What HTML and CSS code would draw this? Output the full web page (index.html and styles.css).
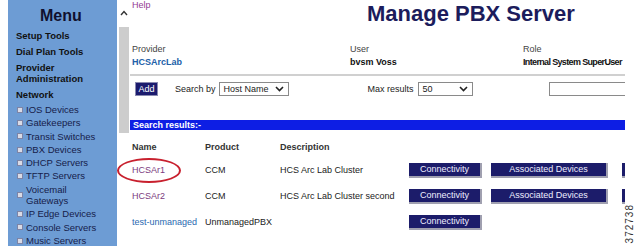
FILE: index.html
```html
<!DOCTYPE html>
<html lang="en">
<head>
  <meta charset="UTF-8">
  <meta name="viewport" content="width=device-width, initial-scale=1.0">
  <title>Manage PBX Server</title>
  <link rel="stylesheet" href="styles.css">
</head>
<body>

  <div class="page">
    <nav class="sidebar">
      <div class="menu-title">Menu</div>
      <div class="menu-head">Setup Tools</div>
      <div class="menu-head">Dial Plan Tools</div>
      <div class="menu-head">Provider<br>Administration</div>
      <div class="menu-head last">Network</div>
      <ul class="menu-list">
        <li><span class="bullet"></span><span>IOS Devices</span></li>
        <li><span class="bullet"></span><span>Gatekeepers</span></li>
        <li><span class="bullet"></span><span>Transit Switches</span></li>
        <li><span class="bullet"></span><span>PBX Devices</span></li>
        <li><span class="bullet"></span><span>DHCP Servers</span></li>
        <li><span class="bullet"></span><span>TFTP Servers</span></li>
        <li><span class="bullet"></span><span>Voicemail<br>Gateways</span></li>
        <li><span class="bullet"></span><span>IP Edge Devices</span></li>
        <li><span class="bullet"></span><span>Console Servers</span></li>
        <li><span class="bullet"></span><span>Music Servers</span></li>
      </ul>
    </nav>

    <div class="scrollbar">
      <svg class="scroll-arrow" width="8" height="6" viewBox="0 0 8 6">
        <polyline points="1,5 4,1.5 7,5" fill="none" stroke="#333" stroke-width="1.4"/>
      </svg>
      <div class="scroll-track"></div>
    </div>

    <main class="content">
      <div class="topbar">
        <a class="help" href="#">Help</a>
        <h1 class="title">Manage PBX Server</h1>
      </div>

      <div class="info">
        <div>
          <div class="info-label">Provider</div>
          <div class="info-value provider">HCSArcLab</div>
        </div>
        <div>
          <div class="info-label">User</div>
          <div class="info-value">bvsm Voss</div>
        </div>
        <div>
          <div class="info-label">Role</div>
          <div class="info-value role">Internal System SuperUser</div>
        </div>
      </div>

      <div class="divider"></div>

      <div class="search-row">
        <button type="button" class="add-btn">Add</button>
        <span class="search-label">Search by</span>
        <div class="select host-select">
          <span>Host Name</span>
          <svg width="9" height="6" viewBox="0 0 9 6"><polyline points="1,1 4.5,4.5 8,1" fill="none" stroke="#222" stroke-width="1.6"/></svg>
        </div>
        <span class="max-label">Max results</span>
        <div class="select max-select">
          <span>50</span>
          <svg width="9" height="6" viewBox="0 0 9 6"><polyline points="1,1 4.5,4.5 8,1" fill="none" stroke="#222" stroke-width="1.6"/></svg>
        </div>
        <input type="text" class="search-input">
      </div>

      <div class="results-bar">Search results:-</div>

      <div class="results">
        <div class="row head">
          <span>Name</span>
          <span>Product</span>
          <span>Description</span>
        </div>
        <div class="row">
          <a class="name visited" href="#">HCSAr1</a>
          <span>CCM</span>
          <span>HCS Arc Lab Cluster</span>
          <button type="button" class="btn conn">Connectivity</button>
          <button type="button" class="btn assoc">Associated Devices</button>
          <button type="button" class="btn more"></button>
        </div>
        <div class="row">
          <a class="name visited" href="#">HCSAr2</a>
          <span>CCM</span>
          <span>HCS Arc Lab Cluster second</span>
          <button type="button" class="btn conn">Connectivity</button>
          <button type="button" class="btn assoc">Associated Devices</button>
          <button type="button" class="btn more"></button>
        </div>
        <div class="row">
          <a class="name" href="#">test-unmanaged</a>
          <span>UnmanagedPBX</span>
          <span></span>
          <button type="button" class="btn conn">Connectivity</button>
        </div>
      </div>
    </main>

    <div class="highlight"></div>
    <div class="figure-id">372738</div>
  </div>

</body>
</html>
```

FILE: styles.css
```css
* {
  box-sizing: border-box;
}
body {
  margin: 0;
  font-family: "Liberation Sans", Arial, sans-serif;
  font-size: 9px;
  color: #222;
  background: #fff;
}
.page {
  position: relative;
  display: flex;
  width: 636px;
  height: 246px;
  overflow: hidden;
}

/* left menu */
.sidebar {
  flex: none;
  width: 109px;
  margin-left: 8px;
  padding: 7px 0 0 8px;
  background: #6d9cd4;
  color: #111;
}
.menu-title {
  margin: 0 0 5px 24px;
  font-size: 16px;
  font-weight: bold;
  line-height: 18px;
  color: #10102e;
}
.menu-head {
  margin-bottom: 5px;
  font-size: 9.5px;
  font-weight: bold;
  line-height: 11px;
}
.menu-head.last {
  margin-bottom: 3px;
}
.menu-list {
  list-style: none;
  margin: 0;
  padding: 0;
}
.menu-list li {
  display: flex;
  align-items: center;
  gap: 3px;
  padding: 1px 0 1px 1px;
  font-size: 9.5px;
  line-height: 11.3px;
  color: #16204a;
}
.bullet {
  flex: none;
  width: 6px;
  height: 6px;
  background: #d9dbe6;
  border: 1px solid #7d84a6;
}

/* scrollbar strip */
.scrollbar {
  flex: none;
  width: 10px;
  margin: 0 1px 0 2px;
  padding-top: 10px;
}
.scroll-arrow {
  display: block;
  margin: 0 auto;
}
.scroll-track {
  margin-top: 11px;
  height: 106px;
  background: #cdcdcd;
}

/* main area */
.content {
  flex: none;
  width: 495px;
  overflow: hidden;
}
.topbar {
  display: grid;
  grid-template-columns: 235px auto;
  padding-left: 2px;
}
.help {
  line-height: 11px;
  color: #943a94;
  text-decoration: none;
}
.title {
  margin: 1px 0 0;
  font-size: 22px;
  line-height: 26px;
  color: #1c1c5c;
  white-space: nowrap;
}
.info {
  display: grid;
  grid-template-columns: 218px 173px auto;
  margin-top: 15.5px;
  padding-left: 2px;
  line-height: 13px;
}
.info-label {
  color: #444;
}
.info-value {
  font-weight: bold;
  color: #111;
  white-space: nowrap;
}
.info-value.provider {
  color: #2160a8;
}
.info-value.role {
  letter-spacing: -0.65px;
}
.divider {
  margin-top: 5.5px;
  height: 2px;
  background: #d0d0d0;
}

.search-row {
  display: flex;
  align-items: center;
  height: 16px;
  margin-top: 5px;
  padding-left: 5px;
  white-space: nowrap;
}
.search-row > * {
  flex: none;
}
.add-btn {
  width: 23px;
  height: 14px;
  padding: 0;
  background: #1b1b6e;
  color: #fff;
  border: 1px solid #8a8ab0;
  font-family: inherit;
  font-size: 9px;
}
.search-label {
  margin-left: 17px;
}
.select {
  display: flex;
  align-items: center;
  justify-content: space-between;
  height: 14px;
  padding: 0 4px;
  background: #fff;
  border: 1px solid #8a8a8a;
}
.host-select {
  width: 70px;
  margin-left: 3px;
}
.max-label {
  margin-left: 79px;
}
.max-select {
  width: 55px;
  margin-left: 4px;
}
.search-input {
  width: 100px;
  height: 14px;
  margin-left: 76px;
  border: 1px solid #8a8a8a;
}

.results-bar {
  margin-top: 23px;
  height: 10px;
  padding-left: 3px;
  background: #0d1ee4;
  color: #fff;
  font-weight: bold;
  line-height: 10px;
}

.results {
  margin-top: 7px;
  padding-left: 2px;
}
.row {
  display: grid;
  grid-template-columns: 73px 75px 129px 82px 131px 80px;
  align-items: center;
  height: 26px;
  line-height: 11px;
  white-space: nowrap;
}
.row.head {
  height: 20px;
  font-weight: bold;
  color: #333;
}
.name {
  color: #2968b0;
  text-decoration: none;
}
.name.visited {
  color: #7c3a80;
}
.btn {
  height: 15px;
  padding: 0;
  background: #1c1c6a;
  color: #eef;
  border: none;
  border-right: 2px solid #a0a0b0;
  border-bottom: 2px solid #a0a0b0;
  font-family: inherit;
  font-size: 9px;
  line-height: 12px;
}
.btn.conn {
  width: 73px;
}
.btn.assoc {
  width: 117px;
}
.btn.more {
  width: 80px;
}

/* annotation overlays */
.highlight {
  position: absolute;
  left: 117px;
  top: 158px;
  width: 64px;
  height: 25px;
  border: 2px solid #c8202e;
  border-radius: 50%;
}
.figure-id {
  position: absolute;
  left: 626px;
  top: 204px;
  writing-mode: vertical-rl;
  transform: rotate(180deg);
  font-size: 10px;
  letter-spacing: 1px;
  line-height: 8px;
  color: #333;
}
```
